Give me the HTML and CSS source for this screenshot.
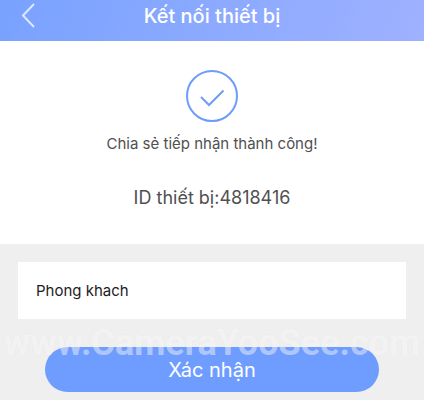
FILE: index.html
```html
<!DOCTYPE html>
<html lang="vi">
<head>
<meta charset="utf-8">
<meta name="viewport" content="width=device-width, initial-scale=1">
<title>Kết nối thiết bị</title>
<link rel="stylesheet" href="styles.css">
</head>
<body>
<header class="topbar">
  <button class="back" type="button" aria-label="Back">
    <svg width="16" height="26" viewBox="0 0 16 26" fill="none" stroke="currentColor" stroke-width="2"><path d="M14 2 3 13.500 14 25"/></svg>
  </button>
  <h1 class="title">Kết nối thiết bị</h1>
</header>
<main>
  <section class="status">
    <svg class="check" width="52" height="52" viewBox="0 0 52 52" fill="none" stroke="currentColor" stroke-width="2"><circle cx="26" cy="26" r="25"/><path d="M15 27l8 8L37.500 20.500"/></svg>
    <p class="message">Chia sẻ tiếp nhận thành công!</p>
    <p class="device">ID thiết bị:4818416</p>
  </section>
  <form class="form">
    <input class="name" type="text" value="Phong khach" aria-label="Device name">
    <div class="actions">
      <button class="confirm" type="button">Xác nhận</button>
      <span class="watermark">www.CameraYooSee.com</span>
    </div>
  </form>
</main>
</body>
</html>
```
FILE: styles.css
```css
* { box-sizing: border-box; }
body {
  margin: 0;
  min-height: 100vh;
  background: #efefef;
  font-family: Inter, "Liberation Sans", sans-serif;
  color: #505050;
}
.topbar {
  display: grid;
  grid-template-columns: 48px 1fr 48px;
  height: 41px;
  background: linear-gradient(110deg, #78a2ff, #9fb1ff);
  color: #fff;
}
.back {
  display: flex;
  padding: 2px 0 0 20px;
  border: 0;
  background: none;
  color: #dfe8ff;
}
.title {
  margin: 0;
  font-size: 20px;
  line-height: 32px;
  font-weight: 500;
  text-align: center;
}
.status {
  display: flex;
  flex-direction: column;
  align-items: center;
  padding: 29px 16px 32px;
  background: #fff;
}
.check { color: #6e9cfb; }
.message {
  margin: 10px 0 0;
  font-size: 15px;
  line-height: 24px;
}
.device {
  margin: 28px 0 0;
  font-size: 18px;
  line-height: 28px;
}
.form { padding: 18px 18px 8px; }
.name {
  display: block;
  width: 100%;
  height: 57px;
  padding: 0 18px;
  border: 0;
  background: #fff;
  color: #1c1c1c;
  font: 15px Inter, "Liberation Sans", sans-serif;
}
.actions {
  position: relative;
  margin: 28px 27px 0;
}
.confirm {
  display: block;
  width: 100%;
  height: 45px;
  border: 0;
  border-radius: 23px;
  background: #6f9dff;
  color: #fff;
  font: 20px Inter, "Liberation Sans", sans-serif;
}
.watermark {
  position: absolute;
  left: 50%;
  top: -26px;
  transform: translateX(-50%);
  font: 700 36px/44px Roboto, "Liberation Sans", sans-serif;
  color: rgba(255, 255, 255, 0.45);
  text-shadow: 0 0 2px rgba(140, 140, 140, 0.06);
  white-space: nowrap;
  pointer-events: none;
}
```
